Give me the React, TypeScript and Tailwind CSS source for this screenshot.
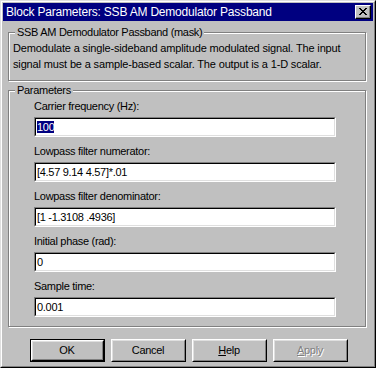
import React from "react";

const font = { fontFamily: '"Liberation Sans", Arial, sans-serif' };

function Field({ label, value, selected }: { label: string; value: string; selected?: boolean }) {
  return (
    <div className="flex flex-col">
      <div className="h-[16px] leading-[16px]">{label}</div>
      <div className="mt-[3px] h-[20px] w-[302px] border border-t-[#808080] border-l-[#808080] border-r-white border-b-white">
        <div className="h-full border border-t-black border-l-black border-r-[#dfdfdf] border-b-[#dfdfdf] bg-white pl-[1px] leading-[16px]">
          {selected ? <span className="bg-[#000080] text-white">{value}</span> : value}
        </div>
      </div>
    </div>
  );
}

function Button({
  children,
  isDefault,
  disabled,
}: {
  children: React.ReactNode;
  isDefault?: boolean;
  disabled?: boolean;
}) {
  const inner = (
    <div className="flex h-full w-full items-center justify-center border border-t-white border-l-white border-r-black border-b-black">
      <div
        className={`flex h-full w-full items-center justify-center border border-t-[#dfdfdf] border-l-[#dfdfdf] border-r-[#808080] border-b-[#808080] ${
          disabled ? "text-[#808080] [text-shadow:1px_1px_0_white]" : "text-black"
        }`}
      >
        {children}
      </div>
    </div>
  );
  if (isDefault) {
    return <div className="h-[23px] w-[75px] border border-black">{inner}</div>;
  }
  return <div className="h-[23px] w-[75px]">{inner}</div>;
}

function GroupBox({
  title,
  className,
  children,
}: {
  title: string;
  className: string;
  children: React.ReactNode;
}) {
  return (
    <div
      className={`relative ml-[5px] w-[358px] border border-[#808080] shadow-[1px_1px_0_white,inset_1px_1px_0_white] ${className}`}
    >
      <span className="absolute -top-[9px] left-[6px] bg-[#c0c0c0] px-[2px] leading-[16px]">{title}</span>
      {children}
    </div>
  );
}

export default function App() {
  return (
    <div className="h-[368px] w-[376px] text-[11px] tracking-[-0.3px] text-black" style={font}>
      <div className="h-full border border-t-[#dfdfdf] border-l-[#dfdfdf] border-r-black border-b-black">
        <div className="flex h-full flex-col border border-t-white border-l-white border-r-[#808080] border-b-[#808080] bg-[#c0c0c0] p-[1px]">
          {/* title bar */}
          <div className="flex h-[18px] items-center justify-between bg-[#000080] pl-[3px] pr-[2px]">
            <span className="text-[12px] leading-[18px] tracking-[-0.2px] text-white">
              Block Parameters: SSB AM Demodulator Passband
            </span>
            <div className="h-[14px] w-[16px] border border-t-white border-l-white border-r-black border-b-black bg-[#c0c0c0]">
              <div className="flex h-full w-full items-center justify-center border-r border-b border-[#808080]">
                <svg width="8" height="7" viewBox="0 0 8 7" shapeRendering="crispEdges">
                  <path
                    d="M0 0h2v1H0zM6 0h2v1H6zM1 1h2v1H1zM5 1h2v1H5zM2 2h4v1H2zM3 3h2v1H3zM2 4h4v1H2zM1 5h2v1H1zM5 5h2v1H5zM0 6h2v1H0zM6 6h2v1H6z"
                    fill="black"
                  />
                </svg>
              </div>
            </div>
          </div>

          <GroupBox title="SSB AM Demodulator Passband (mask)" className="mt-[11px] h-[49px] pl-[4px] pt-[7px]">
            <p className="whitespace-nowrap leading-[16px] tracking-[-0.15px]">
              Demodulate a single-sideband amplitude modulated signal. The input
              <br />
              signal must be a sample-based scalar. The output is a 1-D scalar.
            </p>
          </GroupBox>

          <GroupBox title="Parameters" className="mt-[9px] h-[237px] pl-[25px] pt-[7px]">
            <div className="flex flex-col gap-[6px]">
              <Field label="Carrier frequency (Hz):" value="100" selected />
              <Field label="Lowpass filter numerator:" value="[4.57 9.14 4.57]*.01" />
              <Field label="Lowpass filter denominator:" value="[1 -1.3108 .4936]" />
              <Field label="Initial phase (rad):" value="0" />
              <Field label="Sample time:" value="0.001" />
            </div>
          </GroupBox>

          <div className="mt-[12px] flex justify-center gap-[6px] pl-[1px]">
            <Button isDefault>OK</Button>
            <Button>Cancel</Button>
            <Button>
              <span>
                <u>H</u>elp
              </span>
            </Button>
            <Button disabled>
              <span>
                <u>A</u>pply
              </span>
            </Button>
          </div>
        </div>
      </div>
    </div>
  );
}
